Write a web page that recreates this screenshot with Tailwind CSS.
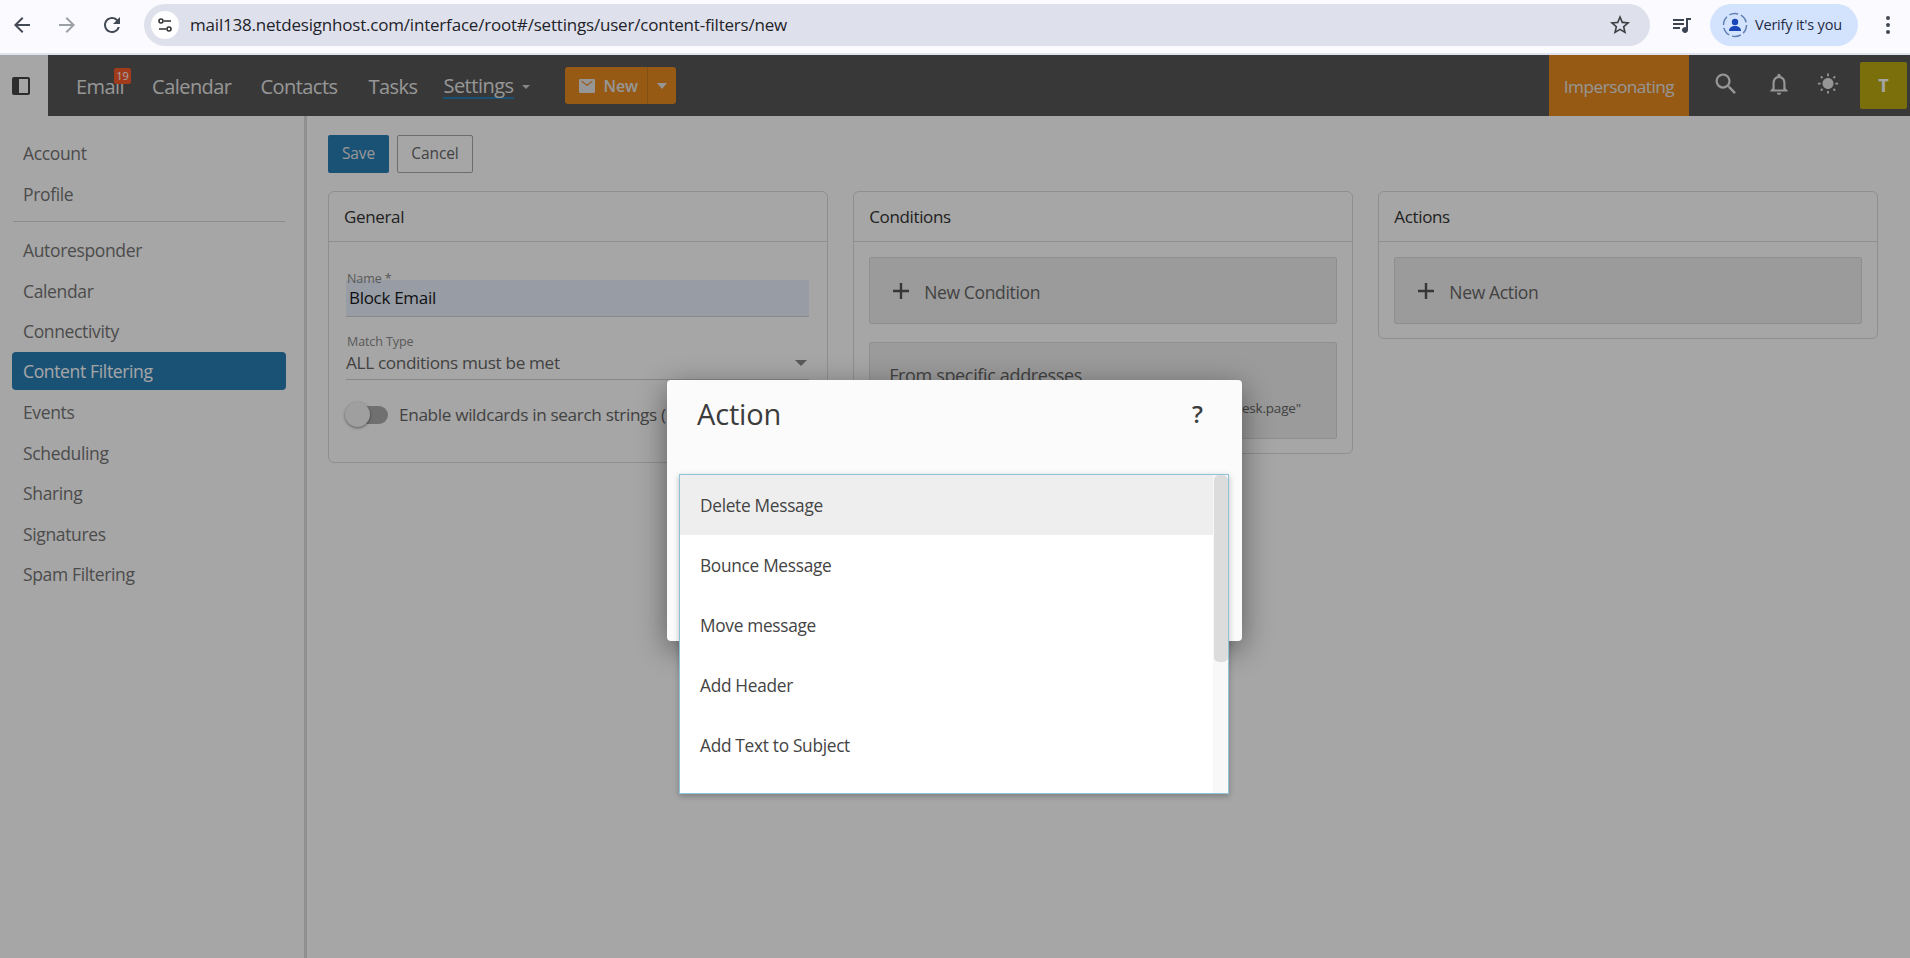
<!DOCTYPE html>
<html lang="en">
<head>
<meta charset="utf-8">
<title>Content Filtering</title>
<script src="https://cdn.jsdelivr.net/npm/@tailwindcss/browser@4"></script>
</head>
<body class="m-0 overflow-hidden bg-white font-['Open_Sans','Noto_Sans',sans-serif]">
<div class="flex h-[958px] w-[1910px] flex-col overflow-hidden">
  <!-- browser bar -->
  <header class="flex h-[55px] shrink-0 items-start border-b-[2px] border-[#dfe3ee] bg-[#fbfbff] pt-[4px] text-[#3c4043]">
    <div class="flex h-[42px] w-[144px] items-center pl-[10px]">
      <svg class="h-[24px] w-[24px] fill-[#444a55]" viewBox="0 0 24 24"><path d="M20 11H7.830l5.590-5.590L12 4l-8 8 8 8 1.410-1.410L7.830 13H20v-2z"/></svg>
      <svg class="ml-[21px] h-[24px] w-[24px] fill-[#9aa0a6]" viewBox="0 0 24 24"><path d="M4 11h12.170l-5.590-5.590L12 4l8 8-8 8-1.410-1.410L16.170 13H4v-2z"/></svg>
      <svg class="ml-[21px] h-[24px] w-[24px] fill-[#444a55]" viewBox="0 0 24 24"><path d="M17.650 6.350A7.958 7.958 0 0 0 12 4c-4.420 0-7.990 3.580-7.990 8s3.570 8 7.990 8c3.730 0 6.840-2.550 7.730-6h-2.080A5.990 5.990 0 0 1 12 18c-3.310 0-6-2.690-6-6s2.690-6 6-6c1.660 0 3.140.69 4.220 1.780L13 11h7V4l-2.350 2.350z"/></svg>
    </div>
    <div class="flex h-[42px] w-[1506px] items-center rounded-full bg-[#dee1ec] pl-[7px] pr-[18px]">
      <span class="flex h-[28px] w-[28px] items-center justify-center rounded-full bg-white">
        <svg class="h-[18px] w-[18px]" viewBox="0 0 18 18" fill="none" stroke="#333" stroke-width="1.600"><circle cx="5" cy="5" r="2"/><path d="M8 5h7M3 13h7"/><circle cx="13" cy="13" r="2"/></svg>
      </span>
      <span class="ml-[11px] text-[17px] tracking-[-0.2px] text-[#1f2329]">mail138.netdesignhost.com/interface/root#/settings/user/content-filters/new</span>
      <svg class="ml-auto h-[24px] w-[24px] fill-[#3c4043]" viewBox="0 0 24 24"><path d="M22 9.240l-7.190-.62L12 2 9.190 8.630 2 9.240l5.460 4.730L5.820 21 12 17.270 18.180 21l-1.630-7.030L22 9.240zM12 15.400l-3.760 2.270 1-4.280-3.320-2.880 4.380-.38L12 6.100l1.710 4.040 4.380.38-3.320 2.880 1 4.280L12 15.400z"/></svg>
    </div>
    <div class="flex h-[42px] w-[60px] items-center justify-center pl-[4px]">
      <svg class="h-[22px] w-[22px] fill-[#3c4352]" viewBox="0 0 22 22"><path d="M2 5h11v2H2zM2 9h11v2H2zM2 13h7v2H2z"/><path d="M15 4h5v2h-3v10a3 3 0 1 1-2-2.800z"/></svg>
    </div>
    <div class="flex h-[42px] w-[148px] items-center rounded-full bg-[#d3e3fd] pl-[12px] text-[14.5px] tracking-[-0.2px] text-[#1f2a44]">
      <svg class="mr-[7px] h-[26px] w-[26px]" viewBox="0 0 26 26" fill="none"><circle cx="13" cy="13" r="11.500" stroke="#5f7fb5" stroke-width="1.500" stroke-dasharray="9 3"/><circle cx="13" cy="10" r="3.200" fill="#1a47b8"/><path d="M7 19c0-3.500 2.600-5 6-5s6 1.500 6 5z" fill="#1a47b8"/></svg>
      Verify it's you
    </div>
    <div class="flex h-[42px] flex-1 items-center justify-center pl-[7px]">
      <svg class="h-[22px] w-[6px] fill-[#444a55]" viewBox="0 0 6 22"><circle cx="3" cy="4" r="2"/><circle cx="3" cy="11" r="2"/><circle cx="3" cy="18" r="2"/></svg>
    </div>
  </header>

  <!-- application -->
  <div class="relative flex min-h-0 flex-1 flex-col bg-white">
    <nav class="flex h-[61px] shrink-0 bg-[#565656] text-[20px] text-[#e6e6e6]">
      <div class="flex w-[48px] items-center bg-white pl-[12px]">
        <span class="flex h-[18px] w-[18px] rounded-[2px] border-[2px] border-[#444] bg-[#444]"><span class="ml-auto h-full w-[9px] bg-white"></span></span>
      </div>
      <div class="flex items-center pl-[28px] pt-[2px]">
        <span class="relative tracking-[-0.55px]">Email<span class="absolute left-[38px] top-[-4px] flex h-[16px] w-[17px] items-center justify-center rounded-[2px] bg-[#f95a2b] text-[11px] leading-none tracking-normal text-white">19</span></span>
        <span class="ml-[28px] tracking-[-0.55px]">Calendar</span>
        <span class="ml-[29px] tracking-[-0.55px]">Contacts</span>
        <span class="ml-[31px] tracking-[-0.55px]">Tasks</span>
        <span class="ml-[26px] border-b-[2px] border-[#287eb6] leading-[23px] tracking-[-0.5px]">Settings</span>
        <span class="ml-[8px] h-0 w-0 border-x-[4px] border-t-[4px] border-x-transparent border-t-[#d0d0d0]"></span>
        <div class="ml-[35px] mb-[2px] flex h-[37px] w-[111px] items-center rounded-[3px] bg-[#e68a1f] text-[16px] font-semibold tracking-[-0.2px]">
          <svg class="ml-[13px] h-[18px] w-[18px] fill-[#e6e6e6]" viewBox="0 0 18 18"><path d="M2 2h14a1 1 0 0 1 1 1v12a1 1 0 0 1-1 1H2a1 1 0 0 1-1-1V3a1 1 0 0 1 1-1zm1.200 2.500L9 9l5.800-4.500-.8-.8L9 7.500 4 3.700z" fill-rule="evenodd"/></svg>
          <span class="ml-[8px]">New</span>
          <span class="ml-auto flex h-full w-[29px] items-center justify-center border-l border-[#c97a1c]"><span class="h-0 w-0 border-x-[5px] border-t-[6px] border-x-transparent border-t-[#e6e6e6]"></span></span>
        </div>
      </div>
      <div class="ml-auto flex">
        <div class="flex w-[140px] items-center justify-center bg-[#e68a1f] pt-[2px] text-[17.2px] tracking-[-0.5px]">Impersonating</div>
        <div class="flex w-[171px] items-center pb-[3px] pl-[23px]">
          <svg class="h-[28px] w-[28px] fill-[#e6e6e6]" viewBox="0 0 24 24"><path d="M15.500 14h-.79l-.28-.27A6.471 6.471 0 0 0 16 9.500 6.500 6.500 0 1 0 9.500 16c1.610 0 3.090-.59 4.230-1.570l.27.28v.79l5 4.990L20.490 19l-4.990-5zm-6 0C7.010 14 5 11.990 5 9.500S7.010 5 9.500 5 14 7.010 14 9.500 11.990 14 9.500 14z"/></svg>
          <svg class="ml-[26px] h-[26px] w-[26px] fill-[#e6e6e6]" viewBox="0 0 24 24"><path d="M12 22c1.100 0 2-.9 2-2h-4c0 1.100.9 2 2 2zm6-6v-5c0-3.070-1.630-5.640-4.500-6.320V4c0-.83-.67-1.500-1.500-1.500s-1.500.67-1.500 1.500v.68C7.640 5.360 6 7.920 6 11v5l-2 2v1h16v-1l-2-2zm-2 1H8v-6c0-2.480 1.510-4.500 4-4.500s4 2.020 4 4.500v6z"/></svg>
          <svg class="ml-[25px] h-[22px] w-[22px] fill-[#e6e6e6]" viewBox="0 0 24 24"><path d="M6.760 4.840l-1.800-1.790-1.410 1.410 1.790 1.790 1.420-1.410zM4 10.500H1v2h3v-2zm9-9.950h-2V3.500h2V.55zm7.450 3.910l-1.410-1.410-1.790 1.790 1.410 1.410 1.790-1.790zm-3.210 13.700l1.790 1.800 1.410-1.410-1.800-1.790-1.400 1.400zM20 10.500v2h3v-2h-3zm-8-5c-3.310 0-6 2.690-6 6s2.690 6 6 6 6-2.690 6-6-2.690-6-6-6zm-1 16.950h2V19.500h-2v2.950zm-7.450-3.910l1.410 1.410 1.790-1.800-1.410-1.410-1.790 1.800z"/></svg>
        </div>
        <div class="flex w-[50px] items-center">
          <span class="flex h-[47px] w-[47px] items-center justify-center rounded-[2px] bg-[#bcab12] text-[18px] font-bold text-white">T</span>
        </div>
      </div>
    </nav>

    <div class="flex min-h-0 flex-1">
      <aside class="flex w-[307px] shrink-0 flex-col border-r-[3px] border-[#dcdcdc] pl-[12px] pr-[18px] pt-[17px] text-[17.5px] tracking-[-0.35px] text-[#757575]">
        <a class="flex h-[40.5px] items-center pl-[11px]">Account</a>
        <a class="flex h-[40.5px] items-center pl-[11px] pt-[1px]">Profile</a>
        <div class="ml-[1px] mr-[1px] mt-[7px] mb-[8px] h-px bg-[#d8d8d8]"></div>
        <a class="flex h-[40.5px] items-center pl-[11px]">Autoresponder</a>
        <a class="flex h-[40.5px] items-center pl-[11px]">Calendar</a>
        <a class="flex h-[40.5px] items-center pl-[11px]">Connectivity</a>
        <a class="mb-[2.5px] flex h-[38px] items-center rounded-[4px] bg-[#287eb6] pl-[11px] pt-[2px] text-white">Content Filtering</a>
        <a class="flex h-[40.5px] items-center pl-[11px]">Events</a>
        <a class="flex h-[40.5px] items-center pl-[11px]">Scheduling</a>
        <a class="flex h-[40.5px] items-center pl-[11px]">Sharing</a>
        <a class="flex h-[40.5px] items-center pl-[11px]">Signatures</a>
        <a class="flex h-[40.5px] items-center pl-[11px]">Spam Filtering</a>
      </aside>
      <main class="flex-1 pl-[21px] pr-[32px] pt-[19px]">
        <div class="flex gap-[8px] text-[15.5px] tracking-[-0.1px]">
          <button class="h-[38px] w-[61px] rounded-[2px] bg-[#287eb6] pb-[1px] text-[#e8e8e8]">Save</button>
          <button class="h-[38px] w-[76px] rounded-[2px] border border-[#a8a8a8] pb-[1px] text-[#666]">Cancel</button>
        </div>
        <div class="mt-[18px] grid grid-cols-3 items-start gap-[25.5px]">
          <section class="h-[272px] rounded-[6px] border border-[#dcdcdc]">
            <h2 class="flex h-[50px] items-center border-b border-[#dcdcdc] pl-[15px] text-[17px] font-normal tracking-[-0.35px] text-[#333]">General</h2>
            <div class="pl-[17px] pr-[18px] pt-[28px]">
              <div class="relative">
                <label class="absolute left-[1px] top-[-8px] text-[12.5px] leading-[14px] tracking-[-0.1px] text-[#8a8a8a]">Name *</label>
                <div class="mt-[10px] flex h-[37px] items-center border-b border-[#cfd3da] bg-[#e8f0fe] pl-[3px] text-[17px] tracking-[-0.3px] text-[#1a1a1a]">Block Email</div>
              </div>
              <div class="mt-[17px] pl-[1px] text-[12.5px] leading-[16px] tracking-[-0.1px] text-[#8a8a8a]">Match Type</div>
              <div class="flex h-[30px] items-center border-b border-[#d0d0d0] pb-[3px] text-[17.2px] tracking-[-0.35px] text-[#666]">ALL conditions must be met<span class="ml-auto mr-[2px] h-0 w-0 border-x-[6px] border-t-[6px] border-x-transparent border-t-[#8a8a8a]"></span></div>
              <div class="mt-[22px] flex items-center">
                <span class="relative h-[18px] w-[42px] shrink-0 rounded-full bg-[#adadad]"><span class="absolute left-[-1px] top-[-4px] h-[25px] w-[25px] rounded-full bg-[#f5f5f5] shadow-[0_1px_3px_rgba(0,0,0,0.45)]"></span></span>
                <span class="ml-[11px] whitespace-nowrap text-[17.2px] tracking-[-0.35px] text-[#666]">Enable wildcards in search strings (</span>
              </div>
            </div>
          </section>
          <section class="h-[263px] rounded-[6px] border border-[#dcdcdc]">
            <h2 class="flex h-[50px] items-center border-b border-[#dcdcdc] pl-[15px] text-[17px] font-normal tracking-[-0.35px] text-[#333]">Conditions</h2>
            <div class="px-[15px] pt-[15px]">
              <div class="flex h-[67px] items-center rounded-[2px] border border-[#dcdcdc] bg-[#eeeeee] pl-[23px] text-[17.5px] tracking-[-0.35px] text-[#666]">
                <svg class="h-[16px] w-[16px] stroke-[#555]" viewBox="0 0 16 16" stroke-width="2.400"><path d="M8 0v16M0 8h16"/></svg>
                <span class="ml-[15px] pt-[3px]">New Condition</span>
              </div>
              <div class="relative mt-[18px] h-[97px] rounded-[2px] border border-[#dcdcdc] bg-[#eeeeee] pl-[19px] pt-[19px] text-[18px] tracking-[-0.35px] text-[#666]">
                From specific addresses
                <span class="absolute right-[35px] top-[55px] text-[13.5px] tracking-[-0.2px]">esk.page"</span>
              </div>
            </div>
          </section>
          <section class="h-[148px] rounded-[6px] border border-[#dcdcdc]">
            <h2 class="flex h-[50px] items-center border-b border-[#dcdcdc] pl-[15px] text-[17px] font-normal tracking-[-0.35px] text-[#333]">Actions</h2>
            <div class="px-[15px] pt-[15px]">
              <div class="flex h-[67px] items-center rounded-[2px] border border-[#dcdcdc] bg-[#eeeeee] pl-[23px] text-[17.5px] tracking-[-0.35px] text-[#666]">
                <svg class="h-[16px] w-[16px] stroke-[#555]" viewBox="0 0 16 16" stroke-width="2.400"><path d="M8 0v16M0 8h16"/></svg>
                <span class="ml-[15px] pt-[3px]">New Action</span>
              </div>
            </div>
          </section>
        </div>
      </main>
    </div>

    <!-- modal layer -->
    <div class="absolute inset-0 bg-black/35"></div>
    <div class="absolute left-[667px] top-[325px] flex h-[261px] w-[575px] items-start justify-between rounded-[4px] bg-[#fbfbfb] pl-[30px] pr-[39px] pt-[13px] text-[#3c3c3c] shadow-[0_8px_30px_rgba(0,0,0,0.45)]">
      <h1 class="text-[29px] font-normal leading-[42px] tracking-[-0.15px]">Action</h1>
      <span class="text-[24px] font-semibold leading-[42px]">?</span>
    </div>
    <div class="absolute left-[679px] top-[419px] flex h-[320px] w-[550px] overflow-hidden border border-[#8fc4d6] bg-white text-[17.3px] tracking-[-0.3px] text-[#444] shadow-[0_2px_6px_rgba(0,0,0,0.25)]">
      <ul class="flex-1">
        <li class="flex h-[60px] items-center bg-[#eeeeee] pl-[20px] pt-[2px]">Delete Message</li>
        <li class="flex h-[60px] items-center pl-[20px] pt-[2px]">Bounce Message</li>
        <li class="flex h-[60px] items-center pl-[20px] pt-[2px]">Move message</li>
        <li class="flex h-[60px] items-center pl-[20px] pt-[2px]">Add Header</li>
        <li class="flex h-[60px] items-center pl-[20px] pt-[2px]">Add Text to Subject</li>
      </ul>
      <div class="w-[15px] bg-[#f8f8f8]"><div class="mx-auto h-[187px] w-[14px] rounded-[5px] bg-[#dcdcdc]"></div></div>
    </div>
  </div>
</div>
</body>
</html>
